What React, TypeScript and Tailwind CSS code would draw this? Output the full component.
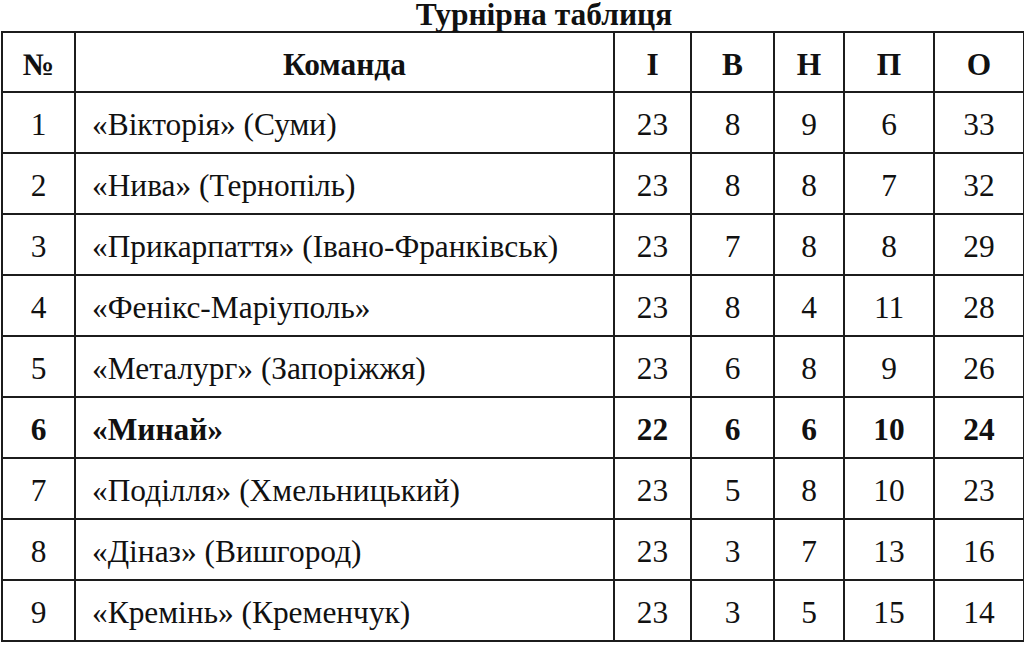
const rows: [string, string, number, number, number, number, number, boolean?][] = [
  ["1", "«Вікторія» (Суми)", 23, 8, 9, 6, 33],
  ["2", "«Нива» (Тернопіль)", 23, 8, 8, 7, 32],
  ["3", "«Прикарпаття» (Івано-Франківськ)", 23, 7, 8, 8, 29],
  ["4", "«Фенікс-Маріуполь»", 23, 8, 4, 11, 28],
  ["5", "«Металург» (Запоріжжя)", 23, 6, 8, 9, 26],
  ["6", "«Минай»", 22, 6, 6, 10, 24, true],
  ["7", "«Поділля» (Хмельницький)", 23, 5, 8, 10, 23],
  ["8", "«Діназ» (Вишгород)", 23, 3, 7, 13, 16],
  ["9", "«Кремінь» (Кременчук)", 23, 3, 5, 15, 14],
];

const cell = "border-2 border-[#1c1c1c] text-center align-middle px-0 pb-0 pt-[5px]";

export default function App() {
  return (
    <div className="w-[1024px] h-[647px] bg-white text-[#111] overflow-hidden pl-[1px] font-['Liberation_Serif','Times_New_Roman',serif]">
      <div className="h-[31px] pl-[63px] text-center text-[31.5px] leading-[29px] font-bold">
        Турнірна таблиця
      </div>
      <table className="border-collapse table-fixed w-[1022px] text-[31.4px] leading-none">
        <colgroup>
          <col className="w-[73px]" />
          <col className="w-[539px]" />
          <col className="w-[77px]" />
          <col className="w-[83px]" />
          <col className="w-[70px]" />
          <col className="w-[90px]" />
          <col className="w-[90px]" />
        </colgroup>
        <thead>
          <tr className="h-[60px] font-bold">
            <th className={cell}>№</th>
            <th className={cell}>Команда</th>
            <th className={cell}>І</th>
            <th className={cell}>В</th>
            <th className={cell}>Н</th>
            <th className={cell}>П</th>
            <th className={cell}>О</th>
          </tr>
        </thead>
        <tbody>
          {rows.map(([n, team, i, w, d, l, pts, bold]) => (
            <tr key={n} className={`h-[61px] ${bold ? "font-bold" : ""}`}>
              <td className={cell}>{n}</td>
              <td className={`${cell} !text-left pl-[16px]`}>{team}</td>
              <td className={cell}>{i}</td>
              <td className={cell}>{w}</td>
              <td className={cell}>{d}</td>
              <td className={cell}>{l}</td>
              <td className={cell}>{pts}</td>
            </tr>
          ))}
        </tbody>
      </table>
    </div>
  );
}
